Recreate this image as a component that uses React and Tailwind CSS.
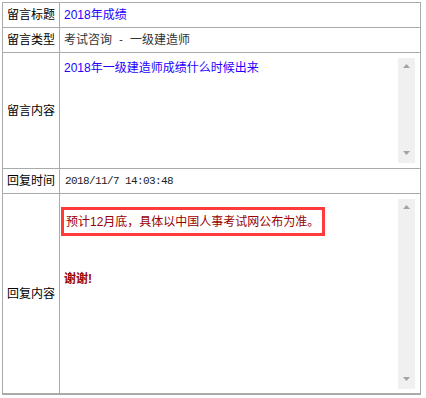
const font = "font-['Liberation_Sans','Noto_Sans_CJK_SC',sans-serif]";

const Scrollbar = () => (
  <div className="w-[17px] shrink-0 bg-[#f0f0f0] flex flex-col items-center justify-between pt-[6px] pb-[8px]">
    <svg width="7" height="4" viewBox="0 0 7 4">
      <path d="M3.5 0 L7 4 L0 4 Z" fill="#a3a3a3" />
    </svg>
    <svg width="7" height="4" viewBox="0 0 7 4">
      <path d="M0 0 L7 0 L3.5 4 Z" fill="#a3a3a3" />
    </svg>
  </div>
);

const Row = ({ label, height, last, children }) => (
  <div className={`flex ${last ? '' : 'border-b border-[#aaa]'}`} style={{ height }}>
    <div className="w-[57px] shrink-0 border-r border-[#aaa] flex items-center justify-center text-[12px] text-black">
      {label}
    </div>
    <div className="flex-1 min-w-0">{children}</div>
  </div>
);

export default function App() {
  return (
    <div className={`min-h-screen bg-white pl-[2px] pt-[2px] ${font}`}>
      <div className="w-[419px] border border-[#aaa] border-b-2">
        <Row label="留言标题" height={25}>
          <div className="h-full flex items-center pl-[4px] text-[12px] text-[#2400ff]">2018年成绩</div>
        </Row>

        <Row label="留言类型" height={25}>
          <div className="h-full flex items-center pl-[4px] text-[12px] text-[#333]">
            考试咨询<span className="font-['Liberation_Mono',monospace] text-[10px] whitespace-pre"> - </span>一级建造师
          </div>
        </Row>

        <Row label="留言内容" height={116}>
          <div className="ml-[1px] mt-[5px] w-[354px] h-[105px] flex">
            <div className="flex-1 pl-[3px] pt-[2px] text-[12px] leading-[16px] text-[#2400ff]">
              2018年一级建造师成绩什么时候出来
            </div>
            <Scrollbar />
          </div>
        </Row>

        <Row label="回复时间" height={25}>
          <div className="h-full flex items-center pl-[5px] font-['Liberation_Mono',monospace] text-[11px] tracking-[-0.6px] text-[#222]">
            2018/11/7 14:03:48
          </div>
        </Row>

        <Row label="回复内容" height={199} last>
          <div className="ml-[1px] mt-[5px] w-[354px] h-[190px] flex">
            <div className="flex-1 pt-[8px] text-[12px] text-[#990000]">
              <div className="w-[264px] h-[29px] border-[3px] border-[#ff3b3b] flex items-center pl-[2px]">
                预计12月底，具体以中国人事考试网公布为准。
              </div>
              <div className="mt-[35px] pl-[3px] leading-[16px] font-bold">谢谢!</div>
            </div>
            <Scrollbar />
          </div>
        </Row>
      </div>
    </div>
  );
}
